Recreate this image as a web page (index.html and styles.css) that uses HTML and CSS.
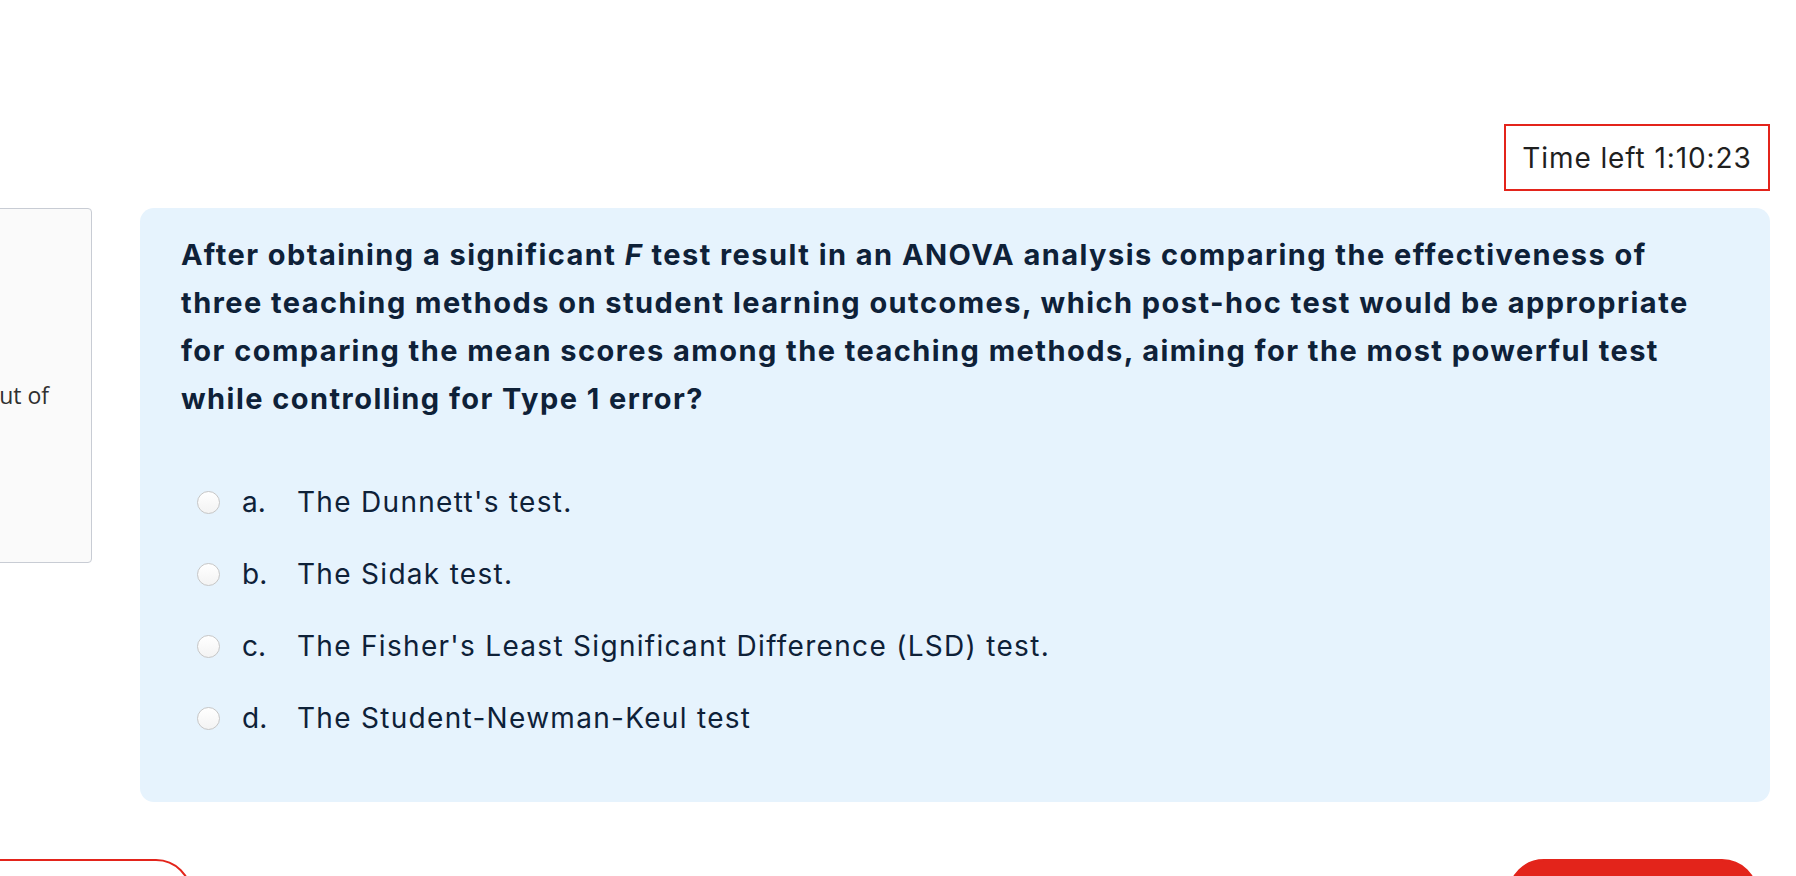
FILE: index.html
```html
<!DOCTYPE html>
<html lang="en">
<head>
<meta charset="utf-8">
<title>Quiz question</title>
<link rel="stylesheet" href="styles.css">
</head>
<body>
<div class="page">
  <div class="timer-row">
    <div class="timer">Time left 1:10:23</div>
  </div>
  <div class="question-row">
    <aside class="info">
      <div class="info-line">Marked out of</div>
    </aside>
    <section class="card">
      <p class="qtext">After obtaining a significant <em>F</em> test result in an ANOVA analysis comparing the effectiveness of three teaching methods on student learning outcomes, which post-hoc test would be appropriate for comparing the mean scores among the teaching methods, aiming for the most powerful test while controlling for Type 1 error?</p>
      <div class="answers">
        <label class="answer"><span class="radio"></span><span class="letter">a.</span><span class="atext">The Dunnett's test.</span></label>
        <label class="answer"><span class="radio"></span><span class="letter">b.</span><span class="atext">The Sidak test.</span></label>
        <label class="answer"><span class="radio"></span><span class="letter">c.</span><span class="atext">The Fisher's Least Significant Difference (LSD) test.</span></label>
        <label class="answer"><span class="radio"></span><span class="letter">d.</span><span class="atext">The Student-Newman-Keul test</span></label>
      </div>
    </section>
  </div>
  <div class="nav-row">
    <button class="btn btn-prev">Previous page</button>
    <button class="btn btn-next">Next page</button>
  </div>
</div>
</body>
</html>
```
FILE: styles.css
```css
html, body {
  margin: 0;
  padding: 0;
  background: #ffffff;
  overflow: hidden;
}
body {
  font-family: Inter, "Liberation Sans", sans-serif;
  color: #0e2138;
}
.page {
  padding: 124px 26px 0 0;
}
.timer-row {
  display: flex;
  justify-content: flex-end;
}
.timer {
  box-sizing: border-box;
  width: 266px;
  height: 67px;
  border: 2px solid #e3241b;
  display: flex;
  align-items: center;
  justify-content: center;
  font-size: 28px;
  color: #1f1f1f;
  letter-spacing: 0.9px;
}
.question-row {
  display: flex;
  margin-top: 17px;
  gap: 48px;
  align-items: flex-start;
}
.info {
  box-sizing: border-box;
  flex: 0 0 300px;
  margin-left: -208px;
  height: 355px;
  background: #fafafa;
  border: 1px solid #c8ccd4;
  border-radius: 4px;
  padding-top: 170px;
}
.info-line {
  font-family: "Open Sans", sans-serif;
  font-size: 23px;
  color: #303030;
  text-align: right;
  padding-right: 42px;
}
.card {
  flex: 1;
  background: #e6f3fd;
  border-radius: 14px;
  padding: 23px 46px 48px 41px;
}
.qtext {
  margin: 0;
  max-width: 1520px;
  font-size: 29px;
  line-height: 48px;
  font-weight: 700;
  letter-spacing: 1.45px;
}
.qtext em {
  font-style: italic;
}
.answers {
  margin-top: 43px;
  display: flex;
  flex-direction: column;
}
.answer {
  display: flex;
  align-items: center;
  height: 72px;
  padding-left: 16px;
  font-size: 28px;
}
.radio {
  box-sizing: border-box;
  width: 23px;
  height: 23px;
  border-radius: 50%;
  border: 1px solid #c6c6c6;
  background: linear-gradient(#ffffff, #f3f3f3);
  margin-right: 22px;
}
.letter {
  width: 55px;
}
.atext {
  letter-spacing: 1.3px;
}
.nav-row {
  display: flex;
  justify-content: space-between;
  margin-top: 57px;
}
.btn {
  box-sizing: border-box;
  height: 72px;
  border-radius: 36px;
  font-family: Inter, sans-serif;
  font-size: 24px;
  padding: 0 40px;
}
.btn-prev {
  width: 300px;
  margin-left: -108px;
  background: #ffffff;
  border: 2px solid #e3241b;
  color: #e3241b;
}
.btn-next {
  width: 250px;
  margin-right: 12px;
  background: #e3241b;
  border: 2px solid #e3241b;
  color: #ffffff;
}
```
